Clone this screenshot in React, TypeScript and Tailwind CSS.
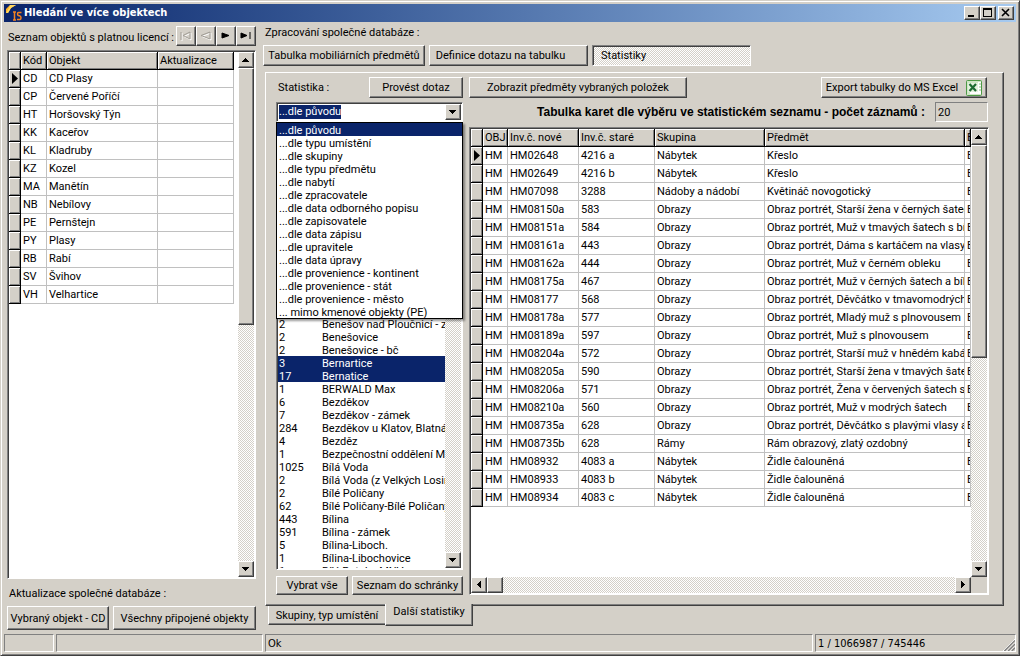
import type { ReactNode } from 'react';
import clsx from 'clsx';

const raised =
  'border border-t-white border-l-white border-r-[#404040] border-b-[#404040] bg-[#d4d0c8] shadow-[inset_-1px_-1px_#808080]';
const sunken =
  'border border-t-[#808080] border-l-[#808080] border-r-white border-b-white shadow-[inset_1px_1px_#404040]';
const sunkenThin = 'border border-t-[#808080] border-l-[#808080] border-r-white border-b-white';
const dither = 'bg-[repeating-conic-gradient(#ffffff_0_25%,#d4d0c8_0_50%)] bg-[length:2px_2px]';

const objects = [
  ['CD', 'CD Plasy'],
  ['CP', 'Červené Poříčí'],
  ['HT', 'Horšovský Týn'],
  ['KK', 'Kaceřov'],
  ['KL', 'Kladruby'],
  ['KZ', 'Kozel'],
  ['MA', 'Manětín'],
  ['NB', 'Nebílovy'],
  ['PE', 'Pernštejn'],
  ['PY', 'Plasy'],
  ['RB', 'Rabí'],
  ['SV', 'Švihov'],
  ['VH', 'Velhartice'],
];

const statOptions = [
  '...dle původu',
  '...dle typu umístění',
  '...dle skupiny',
  '...dle typu předmětu',
  '...dle nabytí',
  '...dle zpracovatele',
  '...dle data odborného popisu',
  '...dle zapisovatele',
  '...dle data zápisu',
  '...dle upravitele',
  '...dle data úpravy',
  '...dle provenience - kontinent',
  '...dle provenience - stát',
  '...dle provenience - město',
  '... mimo kmenové objekty (PE)',
];

const places = [
  { count: 2, name: 'Benešov nad Ploučnicí - z' },
  { count: 2, name: 'Benešovice' },
  { count: 2, name: 'Benešovice - bč' },
  { count: 3, name: 'Bernartice', selected: true },
  { count: 17, name: 'Bernatice', selected: true },
  { count: 1, name: 'BERWALD Max' },
  { count: 6, name: 'Bezděkov' },
  { count: 7, name: 'Bezděkov - zámek' },
  { count: 284, name: 'Bezděkov u Klatov, Blatná' },
  { count: 4, name: 'Bezděz' },
  { count: 1, name: 'Bezpečnostní oddělení Mi' },
  { count: 1025, name: 'Bílá Voda' },
  { count: 2, name: 'Bílá Voda (z Velkých Losin' },
  { count: 2, name: 'Bílé Poličany' },
  { count: 62, name: 'Bílé Poličany-Bílé Poličany' },
  { count: 443, name: 'Bílina' },
  { count: 591, name: 'Bílina - zámek' },
  { count: 5, name: 'Bílina-Liboch.' },
  { count: 1, name: 'Bílina-Libochovice' },
  { count: 1, name: 'Bílý Potok - MNV' },
];

const cards = [
  ['HM02648', '4216 a', 'Nábytek', 'Křeslo'],
  ['HM02649', '4216 b', 'Nábytek', 'Křeslo'],
  ['HM07098', '3288', 'Nádoby a nádobí', 'Květináč novogotický'],
  ['HM08150a', '583', 'Obrazy', 'Obraz portrét, Starší žena v černých šatec'],
  ['HM08151a', '584', 'Obrazy', 'Obraz portrét, Muž v tmavých šatech s bíl'],
  ['HM08161a', '443', 'Obrazy', 'Obraz portrét, Dáma s kartáčem na vlasy'],
  ['HM08162a', '444', 'Obrazy', 'Obraz portrét, Muž v černém obleku'],
  ['HM08175a', '467', 'Obrazy', 'Obraz portrét, Muž v černých šatech a bíle'],
  ['HM08177', '568', 'Obrazy', 'Obraz portrét, Děvčátko v tmavomodrých'],
  ['HM08178a', '577', 'Obrazy', 'Obraz portrét, Mladý muž s plnovousem'],
  ['HM08189a', '597', 'Obrazy', 'Obraz portrét, Muž s plnovousem'],
  ['HM08204a', '572', 'Obrazy', 'Obraz portrét, Starší muž v hnědém kabáte'],
  ['HM08205a', '590', 'Obrazy', 'Obraz portrét, Starší žena v tmavých šatec'],
  ['HM08206a', '571', 'Obrazy', 'Obraz portrét, Žena v červených šatech s'],
  ['HM08210a', '560', 'Obrazy', 'Obraz portrét, Muž v modrých šatech'],
  ['HM08735a', '628', 'Obrazy', 'Obraz portrét, Děvčátko s plavými vlasy a'],
  ['HM08735b', '628', 'Rámy', 'Rám obrazový, zlatý ozdobný'],
  ['HM08932', '4083 a', 'Nábytek', 'Židle čalouněná'],
  ['HM08933', '4083 b', 'Nábytek', 'Židle čalouněná'],
  ['HM08934', '4083 c', 'Nábytek', 'Židle čalouněná'],
];

function Button({ children, className }: { children: ReactNode; className?: string }) {
  return (
    <button type="button" className={clsx(raised, 'flex items-center justify-center pt-0.5 whitespace-nowrap', className)}>
      {children}
    </button>
  );
}

const arrows = {
  up: 'M3 9h7v-1h-1v-1h-1v-1h-1v-1h-1v1h-1v1h-1v1h-1z',
  down: 'M3 5h7v1h-1v1h-1v1h-1v1h-1v-1h-1v-1h-1v-1h-1z',
  left: 'M9 3v7h-1v-1h-1v-1h-1v-1h-1v-1h1v-1h1v-1h1v-1z',
  right: 'M5 3v7h1v-1h1v-1h1v-1h1v-1h-1v-1h-1v-1h-1v-1z',
};

function ArrowButton({ dir, label }: { dir: keyof typeof arrows; label: string }) {
  return (
    <button type="button" aria-label={label} className={clsx(raised, 'size-4 shrink-0')}>
      <svg viewBox="0 0 14 14" className="size-3.5" shapeRendering="crispEdges">
        <path d={arrows[dir]} />
      </svg>
    </button>
  );
}

function VScroll({ thumb }: { thumb?: string }) {
  return (
    <div className={clsx(dither, 'flex w-4 shrink-0 flex-col justify-between')}>
      <div className="flex flex-col">
        <ArrowButton dir="up" label="Nahoru" />
        {thumb && <div className={clsx(raised, thumb)} />}
      </div>
      <ArrowButton dir="down" label="Dolů" />
    </div>
  );
}

function Th({ children }: { children?: ReactNode }) {
  return (
    <th className="h-[18px] overflow-hidden border-r border-b border-black bg-[#d4d0c8] pl-0.5 text-left font-normal shadow-[inset_1px_1px_#fff,inset_-1px_-1px_#808080]">
      {children}
    </th>
  );
}

function Td({ children }: { children?: ReactNode }) {
  return <td className="h-[18px] overflow-hidden border-r border-b border-[#c0c0c0] pl-0.5">{children}</td>;
}

function RowMarker({ active }: { active: boolean }) {
  return (
    <td className="h-[18px] border-r border-b border-black bg-[#d4d0c8] shadow-[inset_1px_1px_#fff,inset_-1px_-1px_#808080]">
      {active && (
        <svg viewBox="0 0 11 17" className="h-[17px] w-[11px]">
          <path d="M3 3v11l6-5.500z" />
        </svg>
      )}
    </td>
  );
}

const tableClass = 'table-fixed border-separate border-spacing-0 whitespace-nowrap leading-[13px]';

function AppIcon() {
  return (
    <svg viewBox="0 0 16 16" className="mr-0.5 size-4">
      <path d="M0 8V4l4-4h6L5 3 2 8z" fill="#ffb428" />
      <path d="M4 0h6L5 3 2 8H0l3-5z" fill="#ffd860" />
      <path d="M7 7h3M8.500 7v8M7 15h3" stroke="#f58220" strokeWidth="1.500" />
      <path d="M15.500 7.500h-3q-1 0-1 1.500t1.500 1.800h.5q1.500.4 1.500 2t-1 1.700h-3" fill="none" stroke="#f58220" strokeWidth="1.500" />
    </svg>
  );
}

function TitleBar() {
  return (
    <header className="flex h-[18px] shrink-0 items-center bg-linear-to-r from-[#0a246a] to-[#a6caf0] pr-0.5 pl-0.5">
      <AppIcon />
      <h1 className="flex-1 font-['DejaVu_Sans_Condensed',sans-serif] text-[11px] font-bold text-white">
        Hledání ve více objektech
      </h1>
      <button type="button" aria-label="Minimalizovat" className={clsx(raised, 'h-3.5 w-4')}>
        <svg viewBox="0 0 14 12" className="h-3 w-3.5"><path d="M3 8h6v2H3z" /></svg>
      </button>
      <button type="button" aria-label="Maximalizovat" className={clsx(raised, 'h-3.5 w-4')}>
        <svg viewBox="0 0 14 12" className="h-3 w-3.5" shapeRendering="crispEdges">
          <path d="M2 1h9v9H2zM3 3v6h7V3z" fillRule="evenodd" />
        </svg>
      </button>
      <button type="button" aria-label="Zavřít" className={clsx(raised, 'ml-0.5 h-3.5 w-4')}>
        <svg viewBox="0 0 14 12" className="h-3 w-3.5">
          <path d="M3 2l7 7M10 2L3 9" stroke="#000" strokeWidth="1.600" />
        </svg>
      </button>
    </header>
  );
}

const navButtons = [
  { label: 'První', off: true, d: 'M4 5v8M13 5v7L6 8.500z' },
  { label: 'Předchozí', off: true, d: 'M13 5v7L4 8.500z' },
  { label: 'Další', off: false, d: 'M5 6v5l7-2.500z' },
  { label: 'Poslední', off: false, d: 'M4 6v5l6-2.500zM13 5v7' },
];

function ObjectsPane() {
  return (
    <section className="flex w-[252px] shrink-0 flex-col pt-1 pl-[3px]">
      <div className="flex h-5 items-center justify-between">
        <h2 className="mt-1 pl-px">Seznam objektů s platnou licencí :</h2>
        <div className="flex">
          {navButtons.map((b) => (
            <button key={b.label} type="button" aria-label={b.label} disabled={b.off} className={clsx(raised, 'size-5')}>
              <svg viewBox="0 0 18 18" className="size-[18px]">
                <path d={b.d} fill={b.off ? 'none' : '#000'} stroke={b.off ? '#fff' : '#000'} transform={b.off ? 'translate(1 1)' : undefined} />
                {b.off && <path d={b.d} fill="none" stroke="#a09c94" />}
              </svg>
            </button>
          ))}
        </div>
      </div>

      <div className={clsx(sunken, 'mt-1 flex min-h-0 flex-1 bg-white p-px')}>
        <div className="min-w-0 flex-1 overflow-hidden">
          <table className={clsx(tableClass, 'w-[225px]')}>
            <colgroup>
              <col className="w-3" />
              <col className="w-[26px]" />
              <col className="w-[111px]" />
              <col />
            </colgroup>
            <thead>
              <tr>
                <Th />
                <Th>Kód</Th>
                <Th>Objekt</Th>
                <Th>Aktualizace</Th>
              </tr>
            </thead>
            <tbody>
              {objects.map(([code, name], i) => (
                <tr key={code}>
                  <RowMarker active={i === 0} />
                  <Td>{code}</Td>
                  <Td>{name}</Td>
                  <Td />
                </tr>
              ))}
            </tbody>
          </table>
        </div>
        <VScroll thumb="h-[257px]" />
      </div>

      <p className="mt-2 pl-0.5 leading-[13px]">Aktualizace společné databáze :</p>
      <div className="mt-1.5 mb-1 flex gap-1">
        <Button className="h-6 w-[102px]">Vybraný objekt - CD</Button>
        <Button className="h-6 flex-1">Všechny připojené objekty</Button>
      </div>
    </section>
  );
}

function StatPicker() {
  return (
    <div className="relative">
      <div className={clsx(sunken, 'flex h-5 items-center bg-white p-px pl-0.5')}>
        <select
          id="statistika"
          defaultValue={statOptions[0]}
          className="h-[14px] appearance-none bg-[#0a246a] leading-[14px] text-white outline-none field-sizing-content"
        >
          {statOptions.map((o) => (
            <option key={o}>{o}</option>
          ))}
        </select>
        <div className="ml-auto flex">
          <ArrowButton dir="down" label="Otevřít seznam" />
        </div>
      </div>
      <ul
        role="listbox"
        aria-label="Statistika"
        className="absolute top-full left-0 z-10 w-full border border-black bg-white shadow-[2px_2px_2px_rgba(0,0,0,0.4)]"
      >
        {statOptions.map((o, i) => (
          <li
            key={o}
            role="option"
            aria-selected={i === 0}
            className={clsx('h-[13px] pl-0.5 leading-[15px]', i === 0 && 'bg-[#0a246a] text-white')}
          >
            {o}
          </li>
        ))}
      </ul>
    </div>
  );
}

function StatColumn() {
  return (
    <div className="flex w-[187px] shrink-0 flex-col">
      <div className="mb-1 flex h-[21px] items-center justify-between">
        <label htmlFor="statistika" className="pt-0.5 pl-0.5">Statistika :</label>
        <Button className="h-[21px] w-[94px]">Provést dotaz</Button>
      </div>
      <StatPicker />
      <div className={clsx(sunken, 'flex min-h-0 flex-1 bg-white p-px')}>
        {/* the rows start below the open drop-down */}
        <ul role="listbox" aria-label="Původ" aria-multiselectable className="min-w-0 flex-1 overflow-hidden pt-[193px]">
          {places.map((p) => (
            <li
              key={p.name}
              role="option"
              aria-selected={!!p.selected}
              className={clsx('flex h-[13px] pl-px leading-[15px] whitespace-nowrap', p.selected && 'bg-[#0a246a] text-white')}
            >
              <span className="w-[43px] shrink-0">{p.count}</span>
              <span>{p.name}</span>
            </li>
          ))}
        </ul>
        <VScroll />
      </div>
      <div className="mt-1.5 flex gap-1">
        <Button className="h-[19px] w-[72px]">Vybrat vše</Button>
        <Button className="h-[19px] flex-1">Seznam do schránky</Button>
      </div>
    </div>
  );
}

function ExcelIcon() {
  return (
    <svg viewBox="0 0 16 16" className="-mt-0.5 size-4">
      <rect x=".5" y=".5" width="15" height="15" rx="1" fill="#cfe6c6" stroke="#4e9a45" />
      <path d="M12 2h3v12H4v-2h8z" fill="#fff" />
      <path d="M13 4h2M13 7h2M13 10h2" stroke="#8cc084" />
      <rect x="2" y="3" width="10" height="9" fill="#e4f2de" />
      <path d="M3.500 4l6.500 7M10 4l-6.500 7" stroke="#1c6b31" strokeWidth="2.200" />
    </svg>
  );
}

function CardsColumn() {
  return (
    <div className="flex min-w-0 flex-1 flex-col">
      <div className="mb-1 flex justify-between pr-0.5">
        <Button className="h-[21px] w-[218px]">Zobrazit předměty vybraných položek</Button>
        <Button className="h-[21px] w-[166px] gap-2">
          Export tabulky do MS Excel
          <ExcelIcon />
        </Button>
      </div>
      <div className="flex h-5 items-center justify-end gap-2.5 pr-px">
        <label htmlFor="pocet" className="font-['Liberation_Sans',Arial,sans-serif] text-[12px] font-bold whitespace-nowrap">
          Tabulka karet dle výběru ve statistickém seznamu - počet záznamů :
        </label>
        <input id="pocet" readOnly value="20" className={clsx(sunkenThin, 'h-5 w-[53px] bg-[#d4d0c8] pl-0.5 outline-none')} />
      </div>
      <div className={clsx(sunken, 'mt-[5px] flex min-h-0 flex-1 flex-col bg-white p-px')}>
        <div className="flex min-h-0 flex-1">
          <div className="min-w-0 flex-1 overflow-hidden">
            <table className={clsx(tableClass, 'w-full')}>
              <colgroup>
                <col className="w-3" />
                <col className="w-[25px]" />
                <col className="w-[71px]" />
                <col className="w-[76px]" />
                <col className="w-[110px]" />
                <col />
                <col className="w-[6px]" />
              </colgroup>
              <thead>
                <tr>
                  <Th />
                  <Th>OBJ</Th>
                  <Th>Inv.č. nové</Th>
                  <Th>Inv.č. staré</Th>
                  <Th>Skupina</Th>
                  <Th>Předmět</Th>
                  <Th>E</Th>
                </tr>
              </thead>
              <tbody>
                {cards.map((card, i) => (
                  <tr key={card[0]}>
                    <RowMarker active={i === 0} />
                    <Td>HM</Td>
                    {card.map((value, c) => (
                      <Td key={c}>{value}</Td>
                    ))}
                    <Td>E</Td>
                  </tr>
                ))}
              </tbody>
            </table>
          </div>
          <VScroll thumb="h-[213px]" />
        </div>
        <div className="flex bg-[#d4d0c8] pr-4">
          <div className={clsx(dither, 'flex flex-1 justify-between')}>
            <div className="flex">
              <ArrowButton dir="left" label="Vlevo" />
              <div className={clsx(raised, 'size-4')} />
            </div>
            <ArrowButton dir="right" label="Vpravo" />
          </div>
        </div>
      </div>
    </div>
  );
}

function StatisticsPane() {
  return (
    <section className="flex min-w-0 flex-1 flex-col pr-3 pl-[7px]">
      <h2 className="mt-1 pl-0.5 leading-[13px]">Zpracování společné databáze :</h2>
      <nav className="mt-1.5 flex gap-1">
        <Button className="h-[21px] w-[162px]">Tabulka mobiliárních předmětů</Button>
        <Button className="h-[21px] w-[159px] pr-4">Definice dotazu na tabulku</Button>
        <button type="button" aria-pressed="true" className={clsx(sunken, dither, 'h-[21px] w-[159px] pt-0.5 pl-2 text-left')}>
          Statistiky
        </button>
      </nav>
      <div className="mt-1.5 ml-0.5 flex min-h-0 flex-1 gap-1.5 border border-t-white border-l-white border-r-[#404040] border-b-[#404040] px-2.5 pt-1 pr-3.5 pb-2.5 shadow-[inset_-1px_-1px_#808080]">
        <StatColumn />
        <CardsColumn />
      </div>
      <nav className="mb-2 ml-[5px] flex items-start">
        <button type="button" className="h-[19px] w-[117px] border border-t-0 border-r-0 border-b-[#404040] border-l-white pt-0.5 whitespace-nowrap shadow-[inset_0_-1px_#808080]">
          Skupiny, typ umístění
        </button>
        <button
          type="button"
          aria-pressed="true"
          className="relative -mt-0.5 h-[22px] w-[88px] border border-t-0 border-r-[#404040] border-b-[#404040] border-l-white bg-[#d4d0c8] pb-1.5 whitespace-nowrap shadow-[inset_-1px_-1px_#808080]"
        >
          Další statistiky
        </button>
      </nav>
    </section>
  );
}

function StatusBar() {
  return (
    <footer className="flex h-[18px] shrink-0 gap-0.5 font-['DejaVu_Sans_Condensed',sans-serif] leading-[18px]">
      <div className={clsx(sunkenThin, 'w-[50px]')} />
      <div className={clsx(sunkenThin, 'w-[207px]')} />
      <div className={clsx(sunkenThin, 'flex-1 pl-0.5')}>Ok</div>
      <div className={clsx(sunkenThin, 'flex w-[201px] justify-between pl-0.5')}>
        1 / 1066987 / 745446
        <svg viewBox="0 0 13 13" className="mt-1 size-3">
          <path d="M0 13L13 0M4 13l9-9M8 13l5-5" stroke="#fff" />
          <path d="M1.500 13L13 1.500M5.500 13L13 5.500M9.500 13L13 9.500" stroke="#808080" strokeWidth="1.500" />
        </svg>
      </div>
    </footer>
  );
}

export default function App() {
  return (
    <div className="flex h-screen flex-col overflow-hidden border border-t-[#d4d0c8] border-r-[#404040] border-b-[#404040] border-l-[#d4d0c8] bg-[#d4d0c8] p-[3px] font-[Roboto,'Liberation_Sans',sans-serif] text-[11px] text-black shadow-[inset_1px_1px_#fff,inset_-1px_-1px_#808080]">
      <TitleBar />
      <main className="flex min-h-0 flex-1">
        <ObjectsPane />
        <StatisticsPane />
      </main>
      <StatusBar />
    </div>
  );
}
